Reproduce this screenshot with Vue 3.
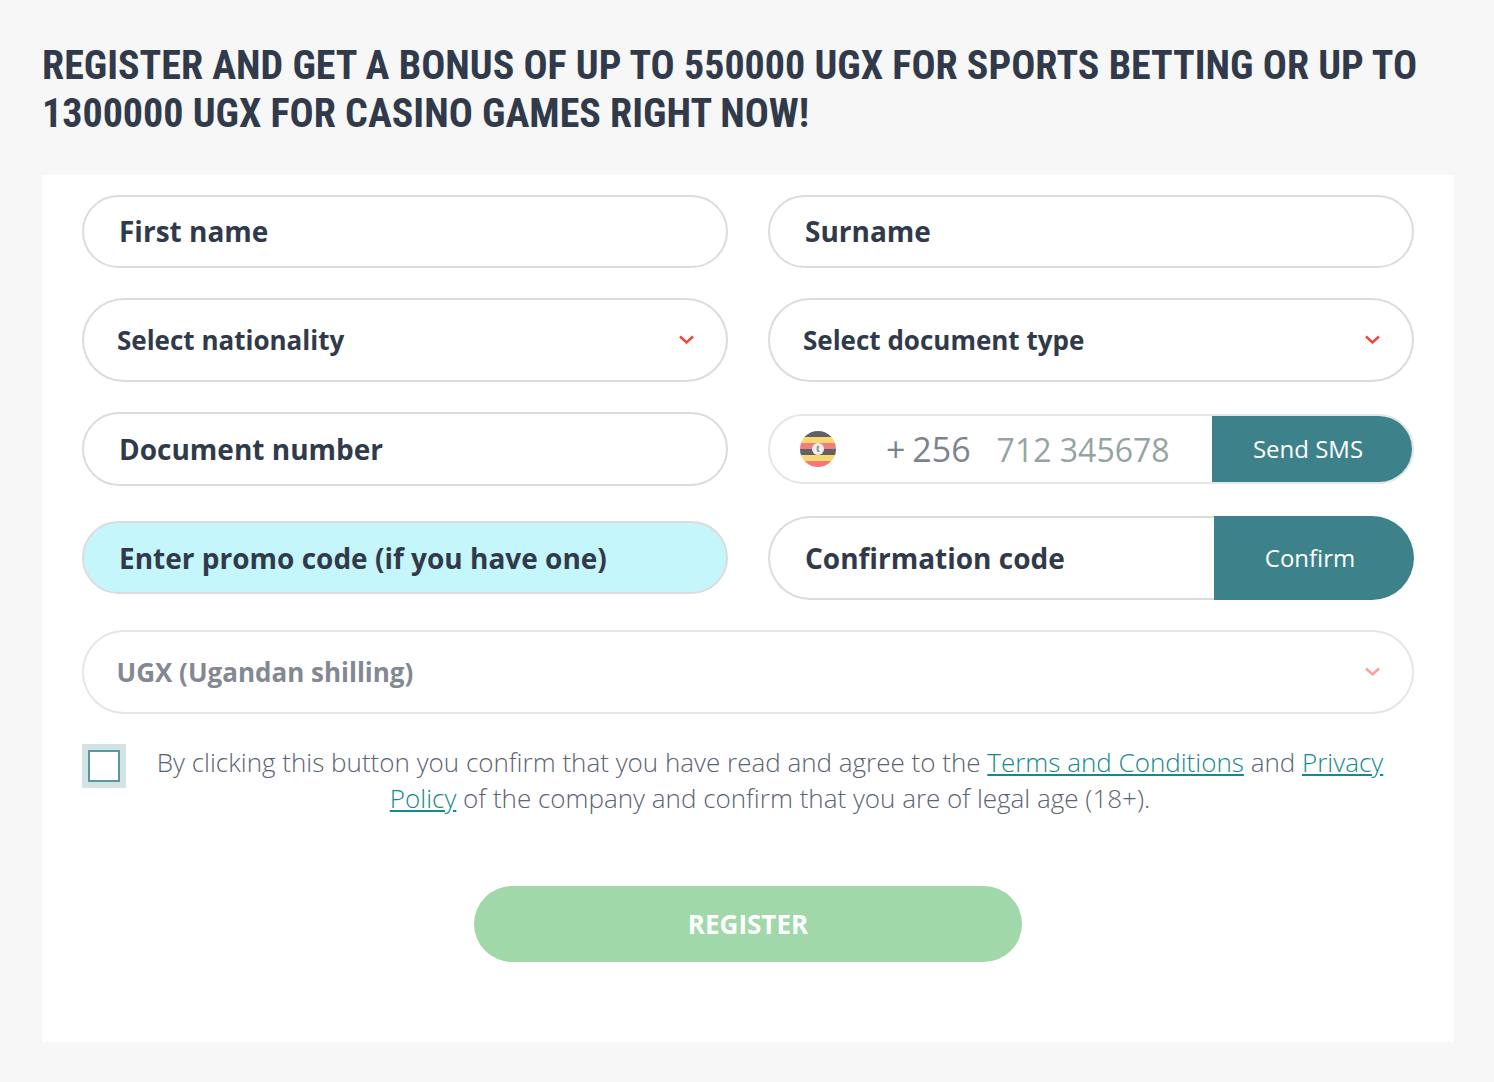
<script setup>
const chevron = 'M1 1.5 L7.5 7.5 L14 1.5'
</script>

<template>
  <div class="page">
    <h1 class="title">REGISTER AND GET A BONUS OF UP TO 550000 UGX FOR SPORTS BETTING OR UP TO 1300000 UGX FOR CASINO GAMES RIGHT NOW!</h1>

    <form class="card" @submit.prevent>
      <div class="fields">
        <div class="field name">First name</div>
        <div class="field name">Surname</div>

        <div class="select">
          <span>Select nationality</span>
          <svg class="chevron" width="15" height="9" viewBox="0 0 15 9"><path :d="chevron" /></svg>
        </div>
        <div class="select">
          <span>Select document type</span>
          <svg class="chevron" width="15" height="9" viewBox="0 0 15 9"><path :d="chevron" /></svg>
        </div>

        <div class="field doc">Document number</div>
        <div class="phone">
          <svg class="flag" width="36" height="36" viewBox="0 0 36 36">
            <defs>
              <clipPath id="flag-clip"><circle cx="18" cy="18" r="18" /></clipPath>
            </defs>
            <g clip-path="url(#flag-clip)">
              <rect width="36" height="6" fill="#616165" />
              <rect y="6" width="36" height="6" fill="#f6d873" />
              <rect y="12" width="36" height="6" fill="#f37c7c" />
              <rect y="18" width="36" height="6" fill="#616165" />
              <rect y="24" width="36" height="6" fill="#f6d873" />
              <rect y="30" width="36" height="6" fill="#f87878" />
              <circle cx="18" cy="18" r="6" fill="#f0f0f0" />
              <path d="M17 14.5 L19.5 15 L18.5 18 L20 21 L17 21 L16.5 17.5 Z" fill="#9a9a9e" />
            </g>
          </svg>
          <span class="code">+ 256</span>
          <span class="number">712 345678</span>
          <button class="side-btn sms" type="button">Send SMS</button>
        </div>

        <div class="field promo">Enter promo code (if you have one)</div>
        <div class="confirm">
          <span class="confirm-label">Confirmation code</span>
          <button class="side-btn conf" type="button">Confirm</button>
        </div>

        <div class="select wide disabled">
          <span>UGX (Ugandan shilling)</span>
          <svg class="chevron" width="15" height="9" viewBox="0 0 15 9"><path :d="chevron" /></svg>
        </div>
      </div>

      <div class="agree">
        <div class="check"><div class="box"></div></div>
        <p>By clicking this button you confirm that you have read and agree to the <a href="#">Terms and Conditions</a> and <a href="#">Privacy Policy</a> of the company and confirm that you are of legal age (18+).</p>
      </div>

      <button class="register" type="submit">REGISTER</button>
    </form>
  </div>
</template>

<style>
html, body {
  margin: 0;
  background: #f7f7f7;
}
</style>

<style scoped>
.page {
  box-sizing: border-box;
  height: 1082px;
  padding: 42px 40px 40px 42px;
  background: #f7f7f7;
  font-family: "Open Sans", sans-serif;
  color: #313a4a;
}
.title {
  margin: 0 0 37px;
  font-family: Roboto, sans-serif;
  font-stretch: 75%;
  font-size: 40px;
  line-height: 48px;
  font-weight: 700;
  color: #313a4a;
}
.card {
  box-sizing: border-box;
  height: 867px;
  padding: 20px 40px 0;
  background: #fff;
}
.fields {
  display: grid;
  grid-template-columns: 646px 646px;
  column-gap: 40px;
  row-gap: 30px;
  align-items: center;
}
.field {
  box-sizing: border-box;
  height: 73px;
  padding: 0 35px;
  display: flex;
  align-items: center;
  border: 2px solid #dcdcdc;
  border-radius: 37px;
  background: #fff;
  font-size: 28px;
  font-weight: 700;
}
.name {
  padding-bottom: 2px;
}
.doc {
  height: 74px;
}
.promo {
  align-self: start;
  margin-top: 5px;
  background: #c5f6fb;
}
.select {
  box-sizing: border-box;
  height: 84px;
  padding: 0 32px 0 33px;
  display: flex;
  align-items: center;
  justify-content: space-between;
  border: 2px solid #dcdcdc;
  border-radius: 42px;
  font-size: 26px;
  font-weight: 700;
}
.wide {
  grid-column: 1 / 3;
  padding-left: 32.5px;
}
.disabled {
  border-color: #e6e6e6;
  color: #838892;
}
.disabled .chevron {
  opacity: 0.5;
}
.chevron {
  margin-top: -2px;
}
.chevron path {
  fill: none;
  stroke: #f4433c;
  stroke-width: 2.4;
}
.phone {
  box-sizing: border-box;
  height: 70px;
  padding-left: 30px;
  display: flex;
  align-items: center;
  border: 2px solid #e6e6e6;
  border-radius: 35px;
  overflow: hidden;
  font-size: 34px;
}
.flag {
  flex: none;
  filter: blur(0.6px);
}
.code {
  margin-left: 50px;
  color: #7d838c;
  word-spacing: -2px;
}
.number {
  margin-left: 26px;
  font-size: 32px;
  color: #95a3a3;
}
.side-btn {
  border: 0;
  padding: 0 8px 2px 0;
  background: #3d828a;
  color: #fff;
  font-family: "Open Sans", sans-serif;
  font-size: 24px;
  cursor: pointer;
}
.sms {
  margin-left: auto;
  width: 200px;
  height: 70px;
}
.confirm {
  height: 84px;
  display: flex;
  font-size: 28px;
  font-weight: 700;
}
.confirm-label {
  box-sizing: border-box;
  flex: 1;
  padding-left: 35px;
  display: flex;
  align-items: center;
  border: 2px solid #dcdcdc;
  border-right: 0;
  border-radius: 42px 0 0 42px;
}
.conf {
  flex: none;
  width: 200px;
  height: 84px;
  border-radius: 0 42px 42px 0;
}
.agree {
  margin-top: 30px;
  display: flex;
  align-items: flex-start;
}
.check {
  box-sizing: border-box;
  flex: none;
  width: 44px;
  height: 44px;
  padding: 6px;
  background: #d3e2e3;
}
.box {
  box-sizing: border-box;
  width: 32px;
  height: 32px;
  border: 2px solid #559a9e;
  background: #fff;
}
.agree p {
  margin: 0 0 0 30.5px;
  width: 1227px;
  text-align: center;
  font-size: 26px;
  font-weight: 300;
  line-height: 36px;
  color: #5b6472;
}
.agree a {
  color: #14898f;
}
.register {
  display: block;
  width: 548px;
  height: 76px;
  margin: 70px auto 0;
  border: 0;
  border-radius: 38px;
  background: #a0d8a9;
  color: #fff;
  font-family: "Open Sans", sans-serif;
  font-size: 26px;
  font-weight: 700;
  cursor: pointer;
}
</style>
